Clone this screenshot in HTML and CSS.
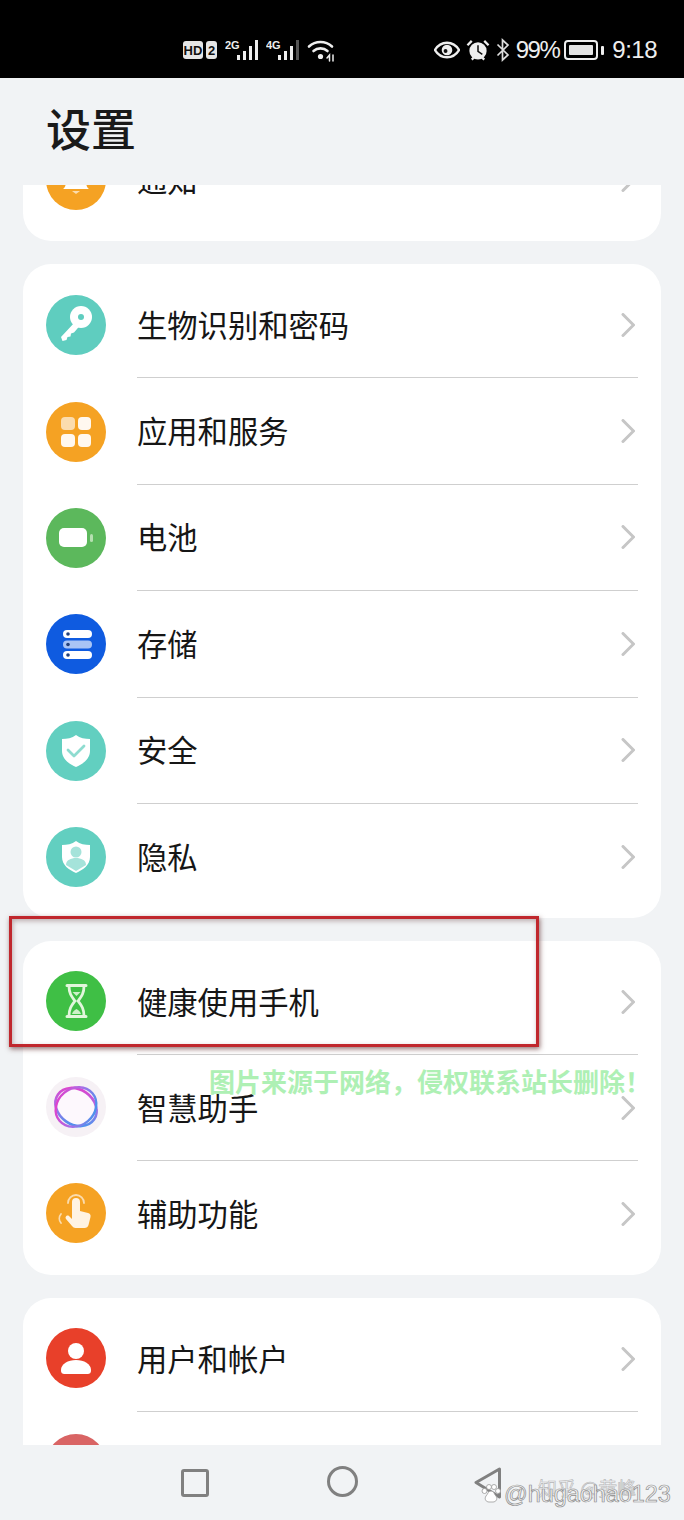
FILE: index.html
```html
<!DOCTYPE html>
<html lang="zh-CN">
<head>
<meta charset="utf-8">
<title>设置</title>
<link rel="stylesheet" href="styles.css">
</head>
<body>
<div class="phone">
  <div class="status">
    <div class="status-left">
      <span class="badge badge-hd">HD</span>
      <span class="badge badge-sim">2</span>
      <svg class="signal" width="34" height="24" viewBox="0 0 34 24"><text x="0" y="11" class="net">2G</text><g fill="#eee"><rect x="12" y="17" width="3" height="5"/><rect x="18" y="13" width="3" height="9"/><rect x="24" y="8" width="3" height="14"/><rect x="30" y="2" width="3" height="20"/></g></svg>
      <svg class="signal" width="34" height="24" viewBox="0 0 34 24"><text x="0" y="11" class="net">4G</text><g fill="#eee"><rect x="12" y="17" width="3" height="5"/><rect x="18" y="13" width="3" height="9"/><rect x="24" y="8" width="3" height="14"/></g><rect x="30" y="2" width="3" height="20" fill="#555"/></svg>
      <svg class="wifi" width="28" height="24" viewBox="0 0 28 24" fill="none" stroke="#eee" stroke-width="2.6" stroke-linecap="round"><path d="M2 8.5C8.5 2.5 18.5 2.5 25 8.500"/><path d="M6.500 13C10.500 9.500 16.500 9.500 20.500 13"/><circle cx="13.500" cy="18.500" r="2.600" fill="#eee" stroke="none"/><path d="M20 20l2.500-3v6M26 17l-0 6" stroke-width="1.500"/></svg>
    </div>
    <div class="status-right">
      <svg width="26" height="18" viewBox="0 0 27 18"><path d="M1 9C7-1 20-1 26 9C20 19 7 19 1 9Z" fill="none" stroke="#eee" stroke-width="2.500"/><circle cx="13.500" cy="9" r="5.500" fill="#eee"/><circle cx="12" cy="10" r="2" fill="#111"/></svg>
      <svg width="24" height="24" viewBox="0 0 25 24"><circle cx="12.500" cy="13" r="9" fill="#eee"/><path d="M12.500 7v6.500l4.500 3" fill="none" stroke="#111" stroke-width="1.600"/><path d="M1.500 7L6 2.500M23.500 7L19 2.500M6 22l2-2M19 22l-2-2" stroke="#eee" stroke-width="2.400" fill="none"/></svg>
      <svg width="14" height="24" viewBox="0 0 14 24" fill="none" stroke="#ddd" stroke-width="1.700"><path d="M1.500 6.500L12 17l-5.500 5V2L12 7 1.500 17.500"/></svg>
      <span class="pct">99%</span>
      <span class="battery"><span class="battery-fill"></span></span>
      <span class="battery-tip"></span>
      <span class="time">9:18</span>
    </div>
  </div>

  <header class="header"><h1 class="title">设置</h1></header>

  <main class="viewport">
    <div class="scroller">
      <section class="card">
        <div class="row">
          <svg class="icon" viewBox="0 0 60 60"><circle cx="30" cy="30" r="30" fill="#f5a223"/><path d="M17 39c3-2 3-6 3-11a10 10 0 0 1 20 0c0 5 0 9 3 11Z" fill="#fff"/><path d="M26 41h8l-4 3Z" fill="#fbdcae"/></svg>
          <div class="row-body"><span class="label">通知</span><svg class="chev" viewBox="0 0 14 24"><path d="M2 1.500L12.500 12 2 22.500"/></svg></div>
        </div>
      </section>

      <section class="card">
        <div class="row">
          <svg class="icon" viewBox="0 0 60 60"><circle cx="30" cy="30" r="30" fill="#5fcdbf"/><circle cx="35" cy="22" r="11" fill="#fff"/><circle cx="35" cy="22" r="3" fill="#5fcdbf"/><path d="M29 27L15 42l1.500 4 4-1 1-3 3-.5.5-3 3-1 6-7Z" fill="#fff"/></svg>
          <div class="row-body"><span class="label">生物识别和密码</span><svg class="chev" viewBox="0 0 14 24"><path d="M2 1.500L12.500 12 2 22.500"/></svg></div>
        </div>
        <div class="row">
          <svg class="icon" viewBox="0 0 60 60"><circle cx="30" cy="30" r="30" fill="#f5a223"/><rect x="15" y="15" width="14" height="13" rx="4" fill="#fbdcae"/><rect x="32" y="15" width="13" height="13" rx="4" fill="#fff8ef"/><rect x="15" y="32" width="14" height="13" rx="4" fill="#fff8ef"/><rect x="32" y="32" width="13" height="13" rx="4" fill="#fff8ef"/></svg>
          <div class="row-body"><span class="label">应用和服务</span><svg class="chev" viewBox="0 0 14 24"><path d="M2 1.500L12.500 12 2 22.500"/></svg></div>
        </div>
        <div class="row">
          <svg class="icon" viewBox="0 0 60 60"><circle cx="30" cy="30" r="30" fill="#5cb85c"/><rect x="13" y="20" width="28" height="19" rx="5" fill="#fff"/><rect x="44" y="26" width="3" height="8" rx="1.500" fill="#b5e0b0"/></svg>
          <div class="row-body"><span class="label">电池</span><svg class="chev" viewBox="0 0 14 24"><path d="M2 1.500L12.500 12 2 22.500"/></svg></div>
        </div>
        <div class="row">
          <svg class="icon" viewBox="0 0 60 60"><circle cx="30" cy="30" r="30" fill="#0f5be0"/><rect x="17" y="16" width="29" height="8" rx="4" fill="#fff"/><rect x="17" y="26.500" width="29" height="8" rx="4" fill="#a9c4f5"/><rect x="17" y="37" width="29" height="8" rx="4" fill="#fff"/><circle cx="22" cy="20" r="1.800" fill="#23407a"/><circle cx="22" cy="30.500" r="1.800" fill="#23407a"/><circle cx="22" cy="41" r="1.800" fill="#23407a"/></svg>
          <div class="row-body"><span class="label">存储</span><svg class="chev" viewBox="0 0 14 24"><path d="M2 1.500L12.500 12 2 22.500"/></svg></div>
        </div>
        <div class="row">
          <svg class="icon" viewBox="0 0 60 60"><circle cx="30" cy="30" r="30" fill="#62cfc0"/><path d="M30 14c4 3 9 4 14 4v12c0 8-7 13-14 16-7-3-14-8-14-16V18c5 0 10-1 14-4Z" fill="#fff"/><path d="M22 29l6 6 10-10" fill="none" stroke="#8fdcd0" stroke-width="2.800" stroke-linecap="round" stroke-linejoin="round"/></svg>
          <div class="row-body"><span class="label">安全</span><svg class="chev" viewBox="0 0 14 24"><path d="M2 1.500L12.500 12 2 22.500"/></svg></div>
        </div>
        <div class="row">
          <svg class="icon" viewBox="0 0 60 60"><circle cx="30" cy="30" r="30" fill="#62cfc0"/><path d="M30 14c4 3 9 4 14 4v12c0 8-7 13-14 16-7-3-14-8-14-16V18c5 0 10-1 14-4Z" fill="#fff"/><circle cx="30" cy="25" r="5.500" fill="#a5e3da"/><path d="M20 38c0-5 5-7 10-7s10 2 10 7l-10 6Z" fill="#a5e3da"/></svg>
          <div class="row-body"><span class="label">隐私</span><svg class="chev" viewBox="0 0 14 24"><path d="M2 1.500L12.500 12 2 22.500"/></svg></div>
        </div>
      </section>

      <section class="card card-tight">
        <div class="row">
          <svg class="icon" viewBox="0 0 60 60"><circle cx="30" cy="30" r="30" fill="#3fbf45"/><path d="M21 14.500h19M21 45.500h19" fill="none" stroke="#e2f6dc" stroke-width="3" stroke-linecap="round"/><path d="M23 15c0 8 3 11 6 15-3 4-6 7-6 15M38 15c0 8-3 11-6 15 3 4 6 7 6 15" fill="none" stroke="#e2f6dc" stroke-width="2.800" stroke-linecap="round"/><path d="M26.500 21h8l-4 4Z M26 43c1-3 3-4 4.500-5 1.500 1 3.500 2 4.500 5Z" fill="#cdf1c8"/></svg>
          <div class="row-body"><span class="label">健康使用手机</span><svg class="chev" viewBox="0 0 14 24"><path d="M2 1.500L12.500 12 2 22.500"/></svg></div>
        </div>
        <div class="row">
          <svg class="icon" viewBox="0 0 60 60"><defs><linearGradient id="ring" x1="0.100" y1="0.100" x2="0.800" y2="1"><stop offset="0" stop-color="#e23fcb"/><stop offset="0.500" stop-color="#a86fe6"/><stop offset="1" stop-color="#3f97ee"/></linearGradient></defs><circle cx="30" cy="30" r="30" fill="#f6f1f5"/><circle cx="30" cy="30" r="18" fill="#fdf8fd"/><ellipse cx="30" cy="30" rx="22" ry="17.500" fill="none" stroke="url(#ring)" stroke-width="2.600" transform="rotate(35 30 30)"/><ellipse cx="30" cy="30" rx="21.500" ry="18.500" fill="none" stroke="url(#ring)" stroke-width="2.400" transform="rotate(-40 30 30)"/></svg>
          <div class="row-body"><span class="label">智慧助手</span><svg class="chev" viewBox="0 0 14 24"><path d="M2 1.500L12.500 12 2 22.500"/></svg></div>
        </div>
        <div class="row">
          <svg class="icon" viewBox="0 0 60 60"><circle cx="30" cy="30" r="30" fill="#f5a223"/><path d="M26 36V19a4 4 0 0 1 8 0v9l8 2c2 .500 3 2 2.500 4l-2 8c-.500 2-2 3-4 3h-9c-1.500 0-2.500-1-3.500-2l-6-7c-1.500-2 1-4.500 3-3Z" fill="#fff3e2"/><path d="M22 20a8 8 0 0 1 16 0M15 31a7 7 0 0 0 0 9" fill="none" stroke="#fbdcae" stroke-width="1.800" stroke-linecap="round"/></svg>
          <div class="row-body"><span class="label">辅助功能</span><svg class="chev" viewBox="0 0 14 24"><path d="M2 1.500L12.500 12 2 22.500"/></svg></div>
        </div>
      </section>

      <section class="card card-tight">
        <div class="row">
          <svg class="icon" viewBox="0 0 60 60"><circle cx="30" cy="30" r="30" fill="#e8402a"/><circle cx="30" cy="23" r="8" fill="#fff"/><path d="M15 42c0-6 7-10 15-10s15 4 15 10c0 3-1 4-4 4H19c-3 0-4-1-4-4Z" fill="#fff"/></svg>
          <div class="row-body"><span class="label">用户和帐户</span><svg class="chev" viewBox="0 0 14 24"><path d="M2 1.500L12.500 12 2 22.500"/></svg></div>
        </div>
        <div class="row">
          <svg class="icon" viewBox="0 0 60 60"><circle cx="30" cy="30" r="30" fill="#d96464"/></svg>
          <div class="row-body"></div>
        </div>
      </section>
    </div>
  </main>

  <nav class="nav">
    <span class="nav-square"></span>
    <span class="nav-circle"></span>
    <svg width="28" height="32" viewBox="0 0 28 32"><path d="M25.500 2L2 15.500 25.500 30Z" fill="none" stroke="#808080" stroke-width="3" stroke-linejoin="round"/></svg>
  </nav>

  <div class="highlight"></div>
  <div class="mark-green">图片来源于网络，侵权联系站长删除！</div>
  <div class="mark-faint">知乎 @黄峰</div>
  <svg class="mark-paw" width="20" height="20" viewBox="0 0 20 20"><g fill="#fff" stroke="#999" stroke-width="0.800"><circle cx="3.500" cy="7" r="2.500"/><circle cx="8" cy="3" r="2.500"/><circle cx="13" cy="3" r="2.500"/><circle cx="17" cy="7" r="2.500"/><path d="M10 7c-3 0-3 3-5 5-2 3 0 6 3 6h4c3 0 5-3 3-6-2-2-2-5-5-5Z"/></g></svg>
  <div class="mark-handle">@hugaohao123</div>
</div>
</body>
</html>
```

FILE: styles.css
```css
* { box-sizing: border-box; }
html, body { margin: 0; padding: 0; }
body { background: #f1f3f5; font-family: "Noto Sans CJK SC", "Noto Sans", sans-serif; color: #161616; }

.phone { position: relative; width: 684px; height: 1520px; display: flex; flex-direction: column; overflow: hidden; background: #f1f3f5; }

.status { height: 78px; flex: none; background: #000; display: flex; align-items: center; justify-content: space-between; padding: 22px 27px 0 183px; color: #eee; font-family: "Liberation Sans", sans-serif; }
.status-left { display: flex; align-items: center; }
.status-right { display: flex; align-items: center; gap: 6px; }

.badge { display: flex; align-items: center; justify-content: center; height: 18px; border-radius: 3px; background: #e6e6e6; color: #111; font-weight: 700; font-size: 13px; }
.badge-hd { width: 20px; }
.badge-sim { width: 11px; margin-left: 3px; margin-right: 8px; }
.signal { margin-right: 7px; }
.net { font-family: "Liberation Sans", sans-serif; font-size: 11px; font-weight: 700; fill: #eee; }

.pct { font-size: 24px; letter-spacing: -1.500px; }
.battery { width: 34px; height: 20px; margin-left: -1px; padding: 3px; border: 2px solid #eee; border-radius: 4px; display: flex; }
.battery-fill { flex: 1; background: #e6e6e6; border-radius: 1px; }
.battery-tip { width: 3px; height: 9px; margin-left: -3px; background: #eee; border-radius: 1px; }
.time { font-size: 24px; letter-spacing: -0.500px; margin-left: 2px; }

.header { height: 107px; flex: none; display: flex; align-items: center; padding: 0 0 8px 46px; }
.title { margin: 0; font-size: 45px; font-weight: 500; line-height: 1; color: #1a1a1a; }

.viewport { height: 1260px; flex: none; overflow: hidden; }
.scroller { margin-top: -66.4px; padding: 0 23px; display: flex; flex-direction: column; gap: 23px; }

.card { background: #fff; border-radius: 28px; padding: 8px 0; }
.row { height: 106.4px; display: flex; align-items: center; padding-left: 23px; }
.card-tight .row { height: 106px; }
.card-tight .icon { margin-bottom: 2px; }
.icon { width: 60px; height: 60px; flex: none; }
.row-body { flex: 1; height: 100%; margin-left: 31px; margin-right: 23px; display: flex; align-items: center; justify-content: space-between; border-bottom: 1px solid #cfcfcf; }
.row:last-child .row-body { border-bottom: 0; }
.label { font-size: 30.300px; line-height: 1; padding-bottom: 2px; }
.chev { width: 14px; height: 24px; margin-right: 3px; fill: none; stroke: #c6c6c6; stroke-width: 3; stroke-linecap: round; stroke-linejoin: round; }

.nav { flex: 1; display: flex; align-items: center; gap: 116px; padding: 0 0 0 181px; background: #f1f3f5; position: relative; }
.nav-square { width: 28px; height: 28px; border: 3px solid #808080; border-radius: 3px; }
.nav-circle { width: 31px; height: 31px; border: 3px solid #808080; border-radius: 50%; margin-left: 2px; margin-top: -2px; }

.highlight { position: absolute; left: 9px; top: 916px; width: 530px; height: 131px; border: 3px solid #c0272d; box-shadow: 1px 2px 5px rgba(90, 40, 40, 0.65), inset 1px 2px 5px rgba(90, 40, 40, 0.35); }
.mark-green { position: absolute; left: 209px; top: 1065px; font-size: 26px; line-height: 32px; font-weight: 700; white-space: nowrap; color: #aef0b4; }
.mark-faint { position: absolute; left: 538px; top: 1476px; font-size: 19px; line-height: 24px; color: #f1f3f5; -webkit-text-stroke: 0.6px #b5b5b5; white-space: nowrap; }
.mark-paw { position: absolute; left: 481px; top: 1484px; }
.mark-handle { position: absolute; left: 504px; top: 1481px; font-family: "Liberation Sans", sans-serif; font-size: 23.400px; line-height: 26px; white-space: nowrap; color: #f4f4f4; -webkit-text-stroke: 0.7px #8e8e8e; }
```
